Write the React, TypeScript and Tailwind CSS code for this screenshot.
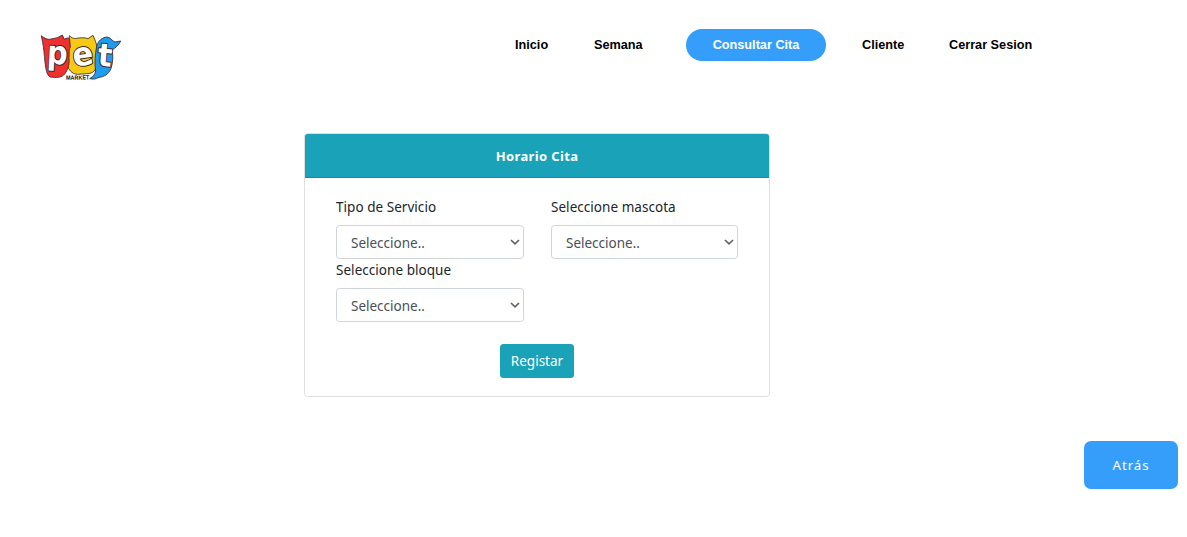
function Logo() {
  return (
    <svg width="100" height="65" viewBox="0 0 300 195" role="img" aria-label="Pet Market" className="block">
      <g stroke="#3b2a2c" strokeWidth="2.6" strokeLinejoin="round">
        <path fill="#f6c915" d="M118 32 C124 38 131 42 140 40 C153 38 164 37 174 41 L189 31 C195 45 199 55 201 65 L200 119 C199 137 187 145 174 146 L142 148 C125 147 115 133 112 120 L115 67 Z" />
        <path fill="#ee302f" d="M34 32 C44 40 53 45 63 42 C77 39 81 39 86 36 L97 30 L103 43 C110 38 115 38 119 42 L121 66 C115 72 119 84 117 98 C119 116 114 134 104 147 C96 158 78 159 61 156 C49 149 48 133 45 112 C43 89 41 68 38 52 Z" />
        <path fill="#1d9cf0" d="M200 64 C205 46 217 37 231 36 C242 37 247 49 255 51 L272 48 C267 60 256 69 246 75 C250 90 249 113 243 130 C236 148 222 156 207 157 C197 163 190 163 179 161 C190 155 195 148 197 138 C193 119 195 88 200 64 Z" />
      </g>
      <g fontFamily="'DejaVu Sans', sans-serif" fontWeight="700" fill="#fff" stroke="#33272a" strokeLinejoin="round" paintOrder="stroke">
        <text x="51" y="117" fontSize="98" strokeWidth="6" textLength="62" lengthAdjust="spacingAndGlyphs" transform="rotate(3 80 90)">p</text>
        <text x="127" y="122" fontSize="98" strokeWidth="6" textLength="62" lengthAdjust="spacingAndGlyphs" transform="rotate(-8 155 90)">e</text>
        <text x="204" y="123" fontSize="95" strokeWidth="6" textLength="43" lengthAdjust="spacingAndGlyphs" transform="rotate(5 223 90)">t</text>
      </g>
      <text x="108" y="164" fontSize="18" fontWeight="700" fill="#111" stroke="#fff" strokeWidth="3" paintOrder="stroke" fontFamily="'Liberation Sans', sans-serif" textLength="70" lengthAdjust="spacingAndGlyphs" transform="rotate(-1 140 158)">MARKET</text>
    </svg>
  );
}

function Field({ label }: { label: string }) {
  return (
    <div className="h-[63px]">
      <label className="block h-[29px] pt-px text-[13.5px] leading-[21px] tracking-[0.04px] text-[#212529]">{label}</label>
      <div className="flex h-[34px] items-center justify-between rounded-[3.5px] border border-[#ced4da] pr-[3px] pl-[14px] text-[13.5px] text-[#495057]">
        <span className="pt-[2px] leading-[21px]">Seleccione..</span>
        <svg width="10" height="6" viewBox="0 0 10 6" fill="none" stroke="#5f6368" strokeWidth="1.7">
          <path d="M1 1 L5 4.8 L9 1" />
        </svg>
      </div>
    </div>
  );
}

export default function App() {
  return (
    <div className="flex h-[537px] w-[1187px] flex-col overflow-hidden bg-white font-['Noto_Sans','Open_Sans',sans-serif]">
      <header className="flex h-[133px] items-start pl-[30px]">
        <div className="pt-[25px]">
          <Logo />
        </div>
        <nav className="mt-[29px] flex h-8 items-center pl-[385px] font-['Liberation_Sans',Arial,sans-serif] text-[12.7px] leading-8 font-bold whitespace-nowrap text-black">
          <a className="w-[79px]">Inicio</a>
          <a className="w-[92px]">Semana</a>
          <a className="mr-9 w-[140px] rounded-full bg-[#349efa] text-center text-white">Consultar Cita</a>
          <a className="w-[87px]">Cliente</a>
          <a>Cerrar Sesion</a>
        </nav>
      </header>

      <main className="ml-[304px] h-[264px] w-[466px] shrink-0 rounded-[3.5px] border border-[#dfdfdf]">
        <h1 className="h-11 rounded-t-[2.5px] border-b border-[#148ea1] bg-[#19a2b8] pt-3 text-center text-[13px] leading-[21px] font-bold tracking-[0.36px] text-white">
          Horario Cita
        </h1>
        <div className="grid grid-cols-[188px_187px] gap-x-[27px] pt-[18px] pl-[31px]">
          <Field label="Tipo de Servicio" />
          <Field label="Seleccione mascota" />
          <Field label="Seleccione bloque" />
        </div>
        <div className="flex justify-center pt-[22px]">
          <button className="h-[34px] w-[74px] rounded-[3.5px] bg-[#19a2b8] text-[13.5px] text-white">Registar</button>
        </div>
      </main>

      <div className="mt-11 flex justify-end pr-[9px]">
        <button className="h-12 w-[94px] rounded-[7px] bg-[#349efa] pt-px text-[13.3px] tracking-[0.9px] text-white">Atrás</button>
      </div>
    </div>
  );
}
